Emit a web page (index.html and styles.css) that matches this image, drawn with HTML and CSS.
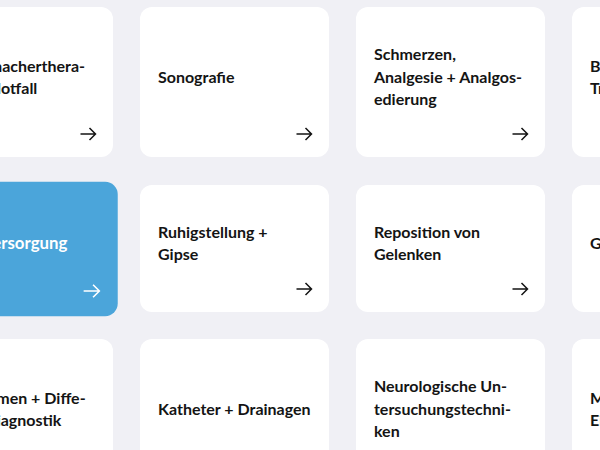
FILE: index.html
```html
<!DOCTYPE html>
<html lang="de">
<head>
<meta charset="utf-8">
<link rel="stylesheet" href="styles.css">
</head>
<body>
<div class="grid">
  <a class="card"><span class="title"><span class="label">Schrittmacherthera-<br>pie im Notfall</span></span><svg class="arrow" viewBox="0 0 17 14"><path d="M0.5 7h15M9.5 1l6 6-6 6"/></svg></a>
  <a class="card"><span class="title"><span class="label">Sonografie</span></span><svg class="arrow" viewBox="0 0 17 14"><path d="M0.5 7h15M9.5 1l6 6-6 6"/></svg></a>
  <a class="card"><span class="title"><span class="label">Schmerzen,<br>Analgesie + Analgos-<br>edierung</span></span><svg class="arrow" viewBox="0 0 17 14"><path d="M0.5 7h15M9.5 1l6 6-6 6"/></svg></a>
  <a class="card"><span class="title"><span class="label">Blutstillung +<br>Transfusion</span></span><svg class="arrow" viewBox="0 0 17 14"><path d="M0.5 7h15M9.5 1l6 6-6 6"/></svg></a>

  <a class="card card-active"><span class="title"><span class="label">Wundversorgung</span></span><svg class="arrow" viewBox="0 0 17 14"><path d="M0.5 7h15M9.5 1l6 6-6 6"/></svg></a>
  <a class="card"><span class="title"><span class="label">Ruhigstellung +<br>Gipse</span></span><svg class="arrow" viewBox="0 0 17 14"><path d="M0.5 7h15M9.5 1l6 6-6 6"/></svg></a>
  <a class="card"><span class="title"><span class="label">Reposition von<br>Gelenken</span></span><svg class="arrow" viewBox="0 0 17 14"><path d="M0.5 7h15M9.5 1l6 6-6 6"/></svg></a>
  <a class="card"><span class="title"><span class="label">Gefäßzugänge</span></span><svg class="arrow" viewBox="0 0 17 14"><path d="M0.5 7h15M9.5 1l6 6-6 6"/></svg></a>

  <a class="card"><span class="title"><span class="label">Symptomen + Diffe-<br>rentialdiagnostik</span></span><svg class="arrow" viewBox="0 0 17 14"><path d="M0.5 7h15M9.5 1l6 6-6 6"/></svg></a>
  <a class="card"><span class="title"><span class="label">Katheter + Drainagen</span></span><svg class="arrow" viewBox="0 0 17 14"><path d="M0.5 7h15M9.5 1l6 6-6 6"/></svg></a>
  <a class="card"><span class="title"><span class="label">Neurologische Un-<br>tersuchungstechni-<br>ken</span></span><svg class="arrow" viewBox="0 0 17 14"><path d="M0.5 7h15M9.5 1l6 6-6 6"/></svg></a>
  <a class="card"><span class="title"><span class="label">Monitoring +<br>Einstellungen</span></span><svg class="arrow" viewBox="0 0 17 14"><path d="M0.5 7h15M9.5 1l6 6-6 6"/></svg></a>
</div>
</body>
</html>
```
FILE: styles.css
```css
html, body {
  margin: 0;
  padding: 0;
  background: #f0f0f5;
  width: 600px;
  height: 450px;
  overflow: hidden;
}
body {
  font-family: "Lato", "Liberation Sans", sans-serif;
  color: #141414;
}
.grid {
  display: grid;
  grid-template-columns: repeat(4, 188.7px);
  column-gap: 27.3px;
  row-gap: 27.3px;
  margin-left: -76px;
  padding-top: 7.3px;
}
.card {
  display: flex;
  flex-direction: column;
  background: #ffffff;
  border-radius: 12px;
  padding: 36px 15.5px 16.5px 18px;
  text-decoration: none;
  color: inherit;
}
.title {
  flex: 1;
  display: flex;
  align-items: center;
}
.label {
  display: block;
  font-size: 16px;
  font-weight: 700;
  line-height: 22.5px;
  white-space: nowrap;
}
.arrow {
  align-self: flex-end;
  width: 17px;
  height: 14px;
  margin-top: 16px;
  fill: none;
  stroke: currentColor;
  stroke-width: 1.5;
}
.card-active {
  background: #4ba5da;
  color: #ffffff;
  transform: scale(1.05);
}
```
